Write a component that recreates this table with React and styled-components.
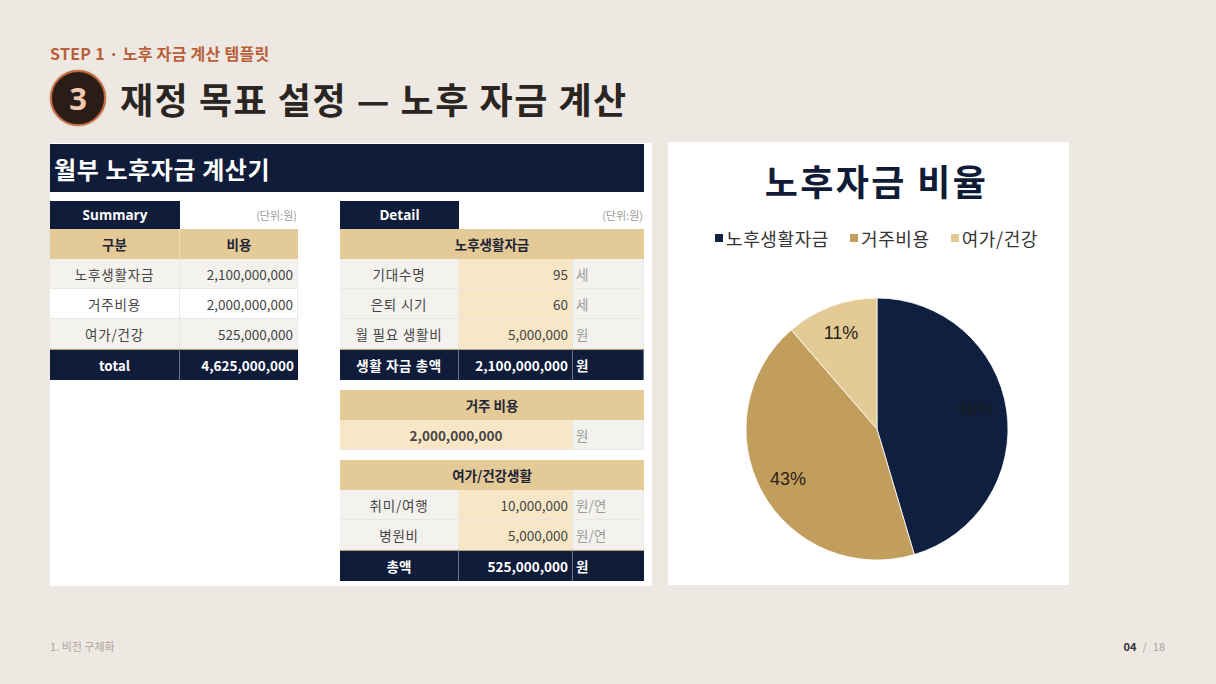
import React from "react";
import styled, { createGlobalStyle } from "styled-components";

const Global = createGlobalStyle`
  html, body { margin: 0; padding: 0; }
  body {
    background: #ede8e2;
    font-family: "Noto Sans CJK KR", "Noto Sans", sans-serif;
  }
  * { box-sizing: border-box; }
`;

const NAVY = "#0f1d3b";
const GOLD = "#e3ca96";
const LIGHT = "#f4f2ee";
const CREAM = "#f7e7c6";

const Page = styled.div`
  width: 1216px;
  height: 684px;
  padding: 42px 50px 0 50px;
  display: flex;
  flex-direction: column;
  overflow: hidden;
`;

const StepLabel = styled.div`
  font-size: 16px;
  line-height: 22px;
  font-weight: 700;
  color: #b9603a;
  letter-spacing: 0.3px;
`;

const TitleRow = styled.div`
  margin-top: 6px;
  height: 56px;
  display: flex;
  align-items: center;
  gap: 14px;
`;

const Badge = styled.div`
  width: 56px;
  height: 56px;
  border-radius: 50%;
  background: #2a1d18;
  border: 2px solid #c2693f;
  box-shadow: 0 0 2px rgba(194, 105, 63, 0.6);
  display: flex;
  align-items: center;
  justify-content: center;
  color: #f1c9b1;
  font-size: 31px;
  font-weight: 700;
  font-family: "Open Sans", "Noto Sans", sans-serif;
  line-height: 1;
`;

const Title = styled.h1`
  margin: 0;
  font-size: 36px;
  font-weight: 700;
  color: #2a2520;
  letter-spacing: 1.5px;
  line-height: 1;
`;

const Content = styled.div`
  margin-top: 16px;
  display: flex;
  gap: 16px;
  align-items: flex-start;
`;

const LeftPanel = styled.div`
  width: 602px;
  height: 443px;
  background: #ffffff;
  padding: 1px 8px 0 0;
  margin-top: 1px;
`;

const CalcBar = styled.div`
  height: 48px;
  background: ${NAVY};
  color: #ffffff;
  font-size: 24px;
  font-weight: 700;
  display: flex;
  align-items: center;
  padding-left: 4px;
  letter-spacing: 0.6px;
`;

const Columns = styled.div`
  margin-top: 9px;
  display: flex;
  gap: 42px;
  align-items: flex-start;
`;

const Table = styled.div`
  display: grid;
  grid-template-columns: ${(p) => p.$cols};
  font-size: 13.5px;
  color: #444;
`;

const HeadCell = styled.div`
  height: 28px;
  background: ${NAVY};
  color: #fff;
  font-weight: 700;
  font-size: 13.5px;
  display: flex;
  align-items: center;
  justify-content: center;
  font-family: "Open Sans", "Noto Sans CJK KR", sans-serif;
`;

const UnitNote = styled.div`
  grid-column: span ${(p) => p.$span || 1};
  height: 28px;
  display: flex;
  align-items: center;
  justify-content: flex-end;
  padding-right: 1px;
  font-size: 11px;
  color: #9a9a9a;
`;

const GoldCell = styled.div`
  grid-column: span ${(p) => p.$span || 1};
  height: 30px;
  background: ${GOLD};
  color: #1f2436;
  font-weight: 700;
  display: flex;
  align-items: center;
  justify-content: center;
  border-right: ${(p) => (p.$divider ? "1px solid #efe0bd" : "none")};
`;

const Cell = styled.div`
  grid-column: span ${(p) => p.$span || 1};
  height: 30px;
  display: flex;
  align-items: center;
  justify-content: ${(p) =>
    p.$align === "right" ? "flex-end" : p.$align === "left" ? "flex-start" : "center"};
  padding: 0 ${(p) => (p.$align === "right" ? "4px" : "3px")};
  background: ${(p) => (p.$bg === "cream" ? CREAM : p.$bg === "light" ? LIGHT : "#ffffff")};
  color: ${(p) => (p.$muted ? "#9b9b9b" : "#454545")};
  font-weight: ${(p) => (p.$bold ? 700 : 400)};
  border-bottom: 1px solid #ebe7e0;
  border-right: 1px solid #ece8e1;
  letter-spacing: ${(p) => (p.$spaced ? "0.8px" : "0")};
`;

const TotalCell = styled.div`
  height: 31px;
  background: ${NAVY};
  color: #ffffff;
  font-weight: 700;
  display: flex;
  align-items: center;
  justify-content: ${(p) =>
    p.$align === "right" ? "flex-end" : p.$align === "left" ? "flex-start" : "center"};
  padding: 0 ${(p) => (p.$align === "right" ? "4px" : "3px")};
  border-top: 1px solid #b9a27a;
  border-right: 1px solid #6d7488;
  letter-spacing: ${(p) => (p.$spaced ? "0.6px" : "0")};
  &:last-child { border-right: none; }
`;

const Spacer = styled.div`
  grid-column: 1 / -1;
  height: 10px;
`;

const ChartPanel = styled.div`
  width: 401px;
  height: 443px;
  background: #ffffff;
  padding: 16px 0 0 16px;
  display: flex;
  flex-direction: column;
  align-items: center;
`;

const ChartTitle = styled.div`
  font-size: 36px;
  line-height: 44px;
  font-weight: 700;
  color: #101c36;
  letter-spacing: 2.4px;
`;

const Legend = styled.div`
  margin-top: 24px;
  height: 24px;
  display: flex;
  align-items: center;
  gap: 21px;
  font-size: 18px;
  color: #333;
  letter-spacing: 0.6px;
`;

const LegendItem = styled.div`
  display: flex;
  align-items: center;
  gap: 3px;
`;

const Swatch = styled.span`
  width: 8px;
  height: 8px;
  background: ${(p) => p.$color};
  display: inline-block;
`;

const PieWrap = styled.div`
  margin-top: 47px;
  width: 264px;
  height: 264px;
`;

const Footer = styled.div`
  margin-top: auto;
  height: 48px;
  display: flex;
  justify-content: space-between;
  align-items: flex-start;
  padding-top: 2px;
  font-size: 11px;
  color: #aca59c;
`;

const PageNum = styled.div`
  display: flex;
  gap: 6px;
  color: #aca59c;
  padding-right: 1px;
`;

const PageCur = styled.span`
  color: #333;
  font-weight: 700;
`;

function Pie() {
  const cx = 132, cy = 132, r = 131;
  const data = [
    { v: 2100, c: "#0e1f3f" },
    { v: 2000, c: "#c29e5d" },
    { v: 525, c: "#e4ca94" },
  ];
  const total = data.reduce((s, d) => s + d.v, 0);
  let a0 = 0;
  const pt = (a) => [cx + r * Math.sin(a), cy - r * Math.cos(a)];
  const paths = data.map((d, i) => {
    const a1 = a0 + (d.v / total) * Math.PI * 2;
    const [x0, y0] = pt(a0);
    const [x1, y1] = pt(a1);
    const large = a1 - a0 > Math.PI ? 1 : 0;
    const p = `M${cx},${cy} L${x0},${y0} A${r},${r} 0 ${large} 1 ${x1},${y1} Z`;
    a0 = a1;
    return <path key={i} d={p} fill={d.c} stroke="#ffffff" strokeWidth="0.8" />;
  });
  return (
    <svg width="264" height="264" viewBox="0 0 264 264">
      {paths}
      <text x="230" y="118" fontSize="18" fontFamily="Liberation Sans, Arial, sans-serif" fill="#1b1b1b" textAnchor="middle">46%</text>
      <text x="43" y="188" fontSize="18" fontFamily="Liberation Sans, Arial, sans-serif" fill="#2a2115" textAnchor="middle">43%</text>
      <text x="96" y="42" fontSize="18" fontFamily="Liberation Sans, Arial, sans-serif" fill="#2a2115" textAnchor="middle">11%</text>
    </svg>
  );
}

export default function App() {
  return (
    <>
      <Global />
      <Page>
        <StepLabel>STEP 1 · 노후 자금 계산 템플릿</StepLabel>
        <TitleRow>
          <Badge>3</Badge>
          <Title>재정 목표 설정 — 노후 자금 계산</Title>
        </TitleRow>
        <Content>
          <LeftPanel>
            <CalcBar>월부 노후자금 계산기</CalcBar>
            <Columns>
              <Table $cols="130px 118px">
                <HeadCell>Summary</HeadCell>
                <UnitNote>(단위:원)</UnitNote>
                <GoldCell $divider>구분</GoldCell>
                <GoldCell>비용</GoldCell>
                <Cell $bg="light" $spaced>노후생활자금</Cell>
                <Cell $bg="light" $align="right">2,100,000,000</Cell>
                <Cell $spaced>거주비용</Cell>
                <Cell $align="right">2,000,000,000</Cell>
                <Cell $bg="light" $spaced>여가/건강</Cell>
                <Cell $bg="light" $align="right">525,000,000</Cell>
                <TotalCell>total</TotalCell>
                <TotalCell $align="right">4,625,000,000</TotalCell>
              </Table>

              <Table $cols="119px 114px 71px">
                <HeadCell>Detail</HeadCell>
                <UnitNote $span={2}>(단위:원)</UnitNote>
                <GoldCell $span={3}>노후생활자금</GoldCell>
                <Cell $bg="light" $spaced>기대수명</Cell>
                <Cell $bg="cream" $align="right">95</Cell>
                <Cell $bg="light" $align="left" $muted>세</Cell>
                <Cell $bg="light" $spaced>은퇴 시기</Cell>
                <Cell $bg="cream" $align="right">60</Cell>
                <Cell $bg="light" $align="left" $muted>세</Cell>
                <Cell $bg="light" $spaced>월 필요 생활비</Cell>
                <Cell $bg="cream" $align="right">5,000,000</Cell>
                <Cell $bg="light" $align="left" $muted>원</Cell>
                <TotalCell $spaced>생활 자금 총액</TotalCell>
                <TotalCell $align="right">2,100,000,000</TotalCell>
                <TotalCell $align="left">원</TotalCell>

                <Spacer />
                <GoldCell $span={3}>거주 비용</GoldCell>
                <Cell $span={2} $bg="cream" $bold>2,000,000,000</Cell>
                <Cell $bg="light" $align="left" $muted>원</Cell>

                <Spacer />
                <GoldCell $span={3}>여가/건강생활</GoldCell>
                <Cell $bg="light" $spaced>취미/여행</Cell>
                <Cell $bg="cream" $align="right">10,000,000</Cell>
                <Cell $bg="light" $align="left" $muted>원/연</Cell>
                <Cell $bg="light" $spaced>병원비</Cell>
                <Cell $bg="cream" $align="right">5,000,000</Cell>
                <Cell $bg="light" $align="left" $muted>원/연</Cell>
                <TotalCell>총액</TotalCell>
                <TotalCell $align="right">525,000,000</TotalCell>
                <TotalCell $align="left">원</TotalCell>
              </Table>
            </Columns>
          </LeftPanel>

          <ChartPanel>
            <ChartTitle>노후자금 비율</ChartTitle>
            <Legend>
              <LegendItem><Swatch $color="#0e1f3f" />노후생활자금</LegendItem>
              <LegendItem><Swatch $color="#c29e5d" />거주비용</LegendItem>
              <LegendItem><Swatch $color="#e4ca94" />여가/건강</LegendItem>
            </Legend>
            <PieWrap>
              <Pie />
            </PieWrap>
          </ChartPanel>
        </Content>
        <Footer>
          <span>1. 비전 구체화</span>
          <PageNum>
            <PageCur>04</PageCur>
            <span>/</span>
            <span>18</span>
          </PageNum>
        </Footer>
      </Page>
    </>
  );
}
